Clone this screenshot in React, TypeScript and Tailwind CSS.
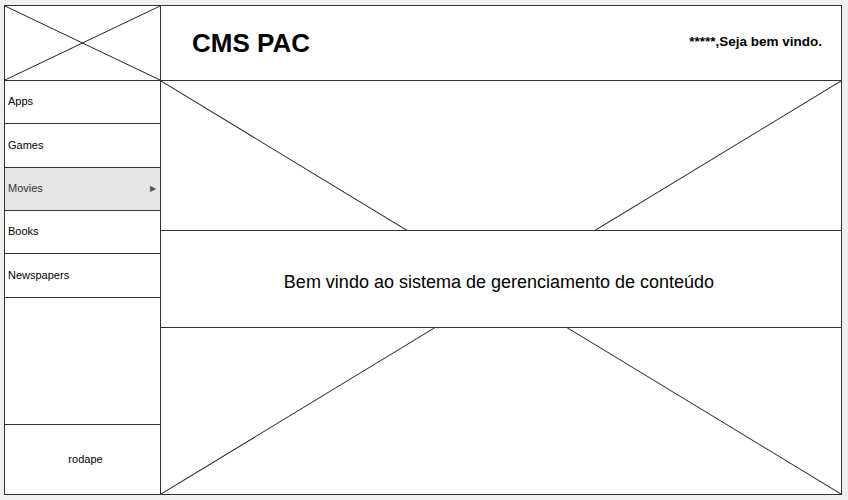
import React from "react";

const XLines = () => (
  <svg className="absolute inset-0 w-full h-full" preserveAspectRatio="none" viewBox="0 0 100 100">
    <line x1="0" y1="0" x2="100" y2="100" stroke="#222" strokeWidth="1" vectorEffect="non-scaling-stroke" />
    <line x1="100" y1="0" x2="0" y2="100" stroke="#222" strokeWidth="1" vectorEffect="non-scaling-stroke" />
  </svg>
);

const navItems: { label: string; h: string; active?: boolean }[] = [
  { label: "Apps", h: "h-[43px]" },
  { label: "Games", h: "h-[44px]" },
  { label: "Movies", h: "h-[43px]", active: true },
  { label: "Books", h: "h-[43px]" },
  { label: "Newspapers", h: "h-[44px]" },
];

export default function App() {
  return (
    <div
      className="w-[848px] h-[500px] bg-[#f0f0f0] pl-[4px] pt-[5px] overflow-hidden"
      style={{ fontFamily: '"Liberation Sans", Arial, sans-serif' }}
    >
      <div className="w-[838px] h-[490px] border border-[#333] bg-white flex">
        {/* Left column */}
        <div className="w-[156px] border-r border-[#333] flex flex-col">
          <div className="relative h-[75px] border-b border-[#333] shrink-0">
            <XLines />
          </div>
          {navItems.map((it) => (
            <div
              key={it.label}
              className={`${it.h} shrink-0 border-b border-[#333] flex items-center justify-between pl-[3px] pr-[4px] pb-[1px] text-[11px] ${
                it.active ? "bg-[#e6e6e6] text-[#333]" : "text-black"
              }`}
            >
              <span>{it.label}</span>
              {it.active && <span className="text-[8px] text-[#555]">▶</span>}
            </div>
          ))}
          <div className="flex-1" />
          <div className="h-[70px] shrink-0 border-t border-[#333] flex items-center justify-center pl-[6px] text-[11px] text-black">
            rodape
          </div>
        </div>

        {/* Right column */}
        <div className="flex-1 flex flex-col">
          <div className="h-[75px] shrink-0 border-b border-[#333] flex items-center justify-between pl-[31px] pr-[19px] pb-[1px]">
            <span className="text-[26px] font-bold text-black leading-none">CMS PAC</span>
            <span className="text-[13.5px] font-bold text-black">*****,Seja bem vindo.</span>
          </div>
          <div className="relative flex-1 flex flex-col">
            <XLines />
            <div className="h-[149px] shrink-0" />
            <div className="relative h-[98px] shrink-0 border-y border-[#333] bg-white flex items-center justify-center pt-[6px] pr-[4px] text-[18px] text-black">
              Bem vindo ao sistema de gerenciamento de conteúdo
            </div>
            <div className="flex-1" />
          </div>
        </div>
      </div>
    </div>
  );
}
